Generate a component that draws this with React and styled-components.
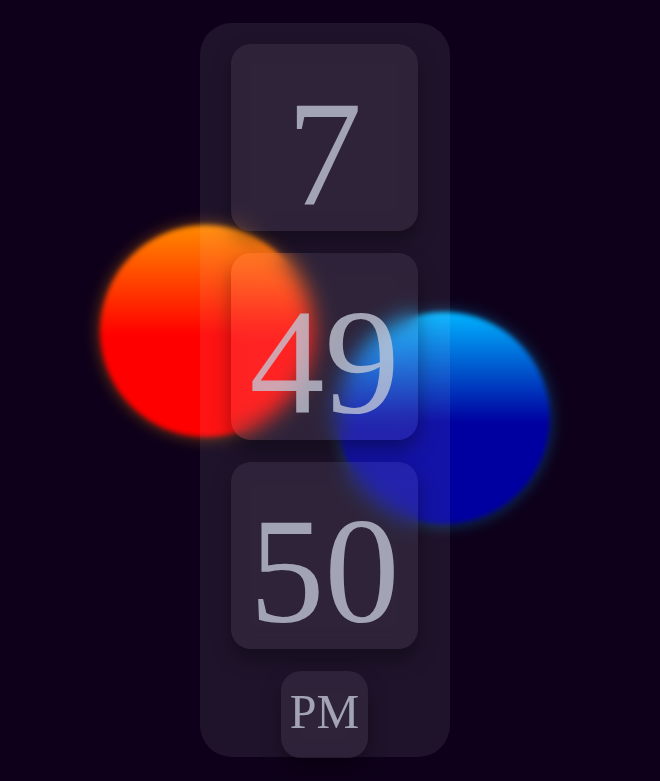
import React from "react"
import styled, { createGlobalStyle } from "styled-components"

const Global = createGlobalStyle`
  html, body {
    margin: 0;
    padding: 0;
    background: #0e001a;
  }
  body {
    font-family: "Liberation Serif", "Times New Roman", serif;
  }
`

export default function App() {
    return (
        <Page>
            <Global />
            <Stage>
                <Blob $top={225} $left={100} $from="#ff8a00" $to="#ff0000" $glow="rgba(255, 140, 0, 0.45)" />
                <Blob $top={312} $left={338} $from="#00b4ff" $to="#0000a0" $glow="rgba(0, 170, 255, 0.4)" />
                <Clock>
                    <Tile>7</Tile>
                    <Tile>49</Tile>
                    <Tile>50</Tile>
                    <Meridiem>PM</Meridiem>
                </Clock>
            </Stage>
        </Page>
    )
}

const Page = styled.div`
    width: 660px;
    height: 781px;
    display: flex;
    justify-content: center;
    padding-top: 23px;
    padding-right: 10px;
    box-sizing: border-box;
    overflow: hidden;
`

const Stage = styled.div`
    position: relative;
    width: 250px;
`

const Blob = styled.div`
    position: absolute;
    top: ${props => props.$top - 23}px;
    left: ${props => props.$left - 200}px;
    width: 212px;
    height: 212px;
    border-radius: 50%;
    background: linear-gradient(180deg, ${props => props.$from} 0%, ${props => props.$to} 52%);
    box-shadow: 0 0 16px ${props => props.$glow};
    filter: blur(2.5px);
`

const Clock = styled.div`
    position: relative;
    width: 250px;
    height: 734px;
    box-sizing: border-box;
    padding: 21px 32px 0 31px;
    border-radius: 32px;
    background: rgba(255, 255, 255, 0.075);
    display: flex;
    flex-direction: column;
    align-items: center;
    gap: 22px;
`

const Tile = styled.div`
    width: 187px;
    height: 187px;
    flex-shrink: 0;
    border-radius: 20px;
    background: rgba(255, 255, 255, 0.07);
    backdrop-filter: blur(10px);
    box-shadow: 0 10px 20px rgba(0, 0, 0, 0.35);
    display: flex;
    align-items: center;
    justify-content: center;
    color: rgba(195, 200, 215, 0.78);
    font-size: 150px;
    line-height: 1;
    padding-top: 30px;
    box-sizing: border-box;
`

const Meridiem = styled.div`
    width: 87px;
    height: 87px;
    flex-shrink: 0;
    border-radius: 20px;
    background: rgba(255, 255, 255, 0.07);
    backdrop-filter: blur(10px);
    box-shadow: 0 10px 20px rgba(0, 0, 0, 0.35);
    display: flex;
    align-items: center;
    justify-content: center;
    color: rgba(195, 200, 215, 0.78);
    font-size: 48px;
    line-height: 1;
    padding-bottom: 6px;
    box-sizing: border-box;
`
